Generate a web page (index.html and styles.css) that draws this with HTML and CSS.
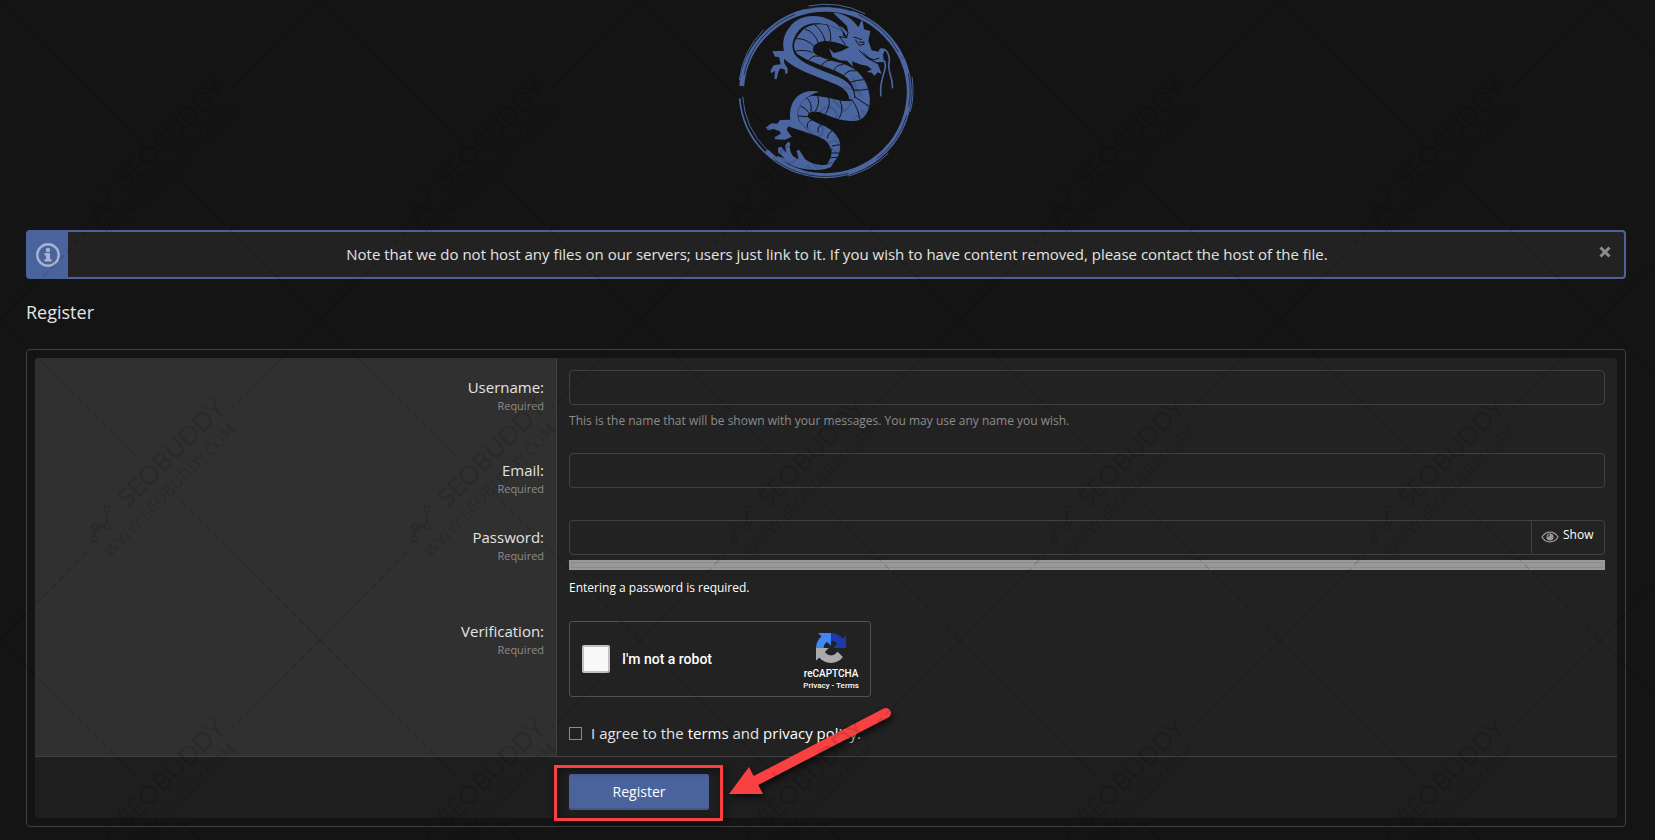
FILE: index.html
```html
<!DOCTYPE html>
<html lang="en">
<head>
<meta charset="utf-8">
<meta name="viewport" content="width=device-width, initial-scale=1">
<title>Register</title>
<link rel="stylesheet" href="styles.css">
</head>
<body>
<div class="page">
  <header class="header">
    <svg class="logo" viewBox="3 0 600 555" role="img" aria-label="Dragon logo">
      <g class="ring">
        <path stroke-width="15" d="M50 258A252 252 0 0 1 553 275A252 252 0 0 1 301 527A252 252 0 0 1 123 453"/>
        <path stroke-width="5" d="M44 295A257 257 0 0 0 119 457"/>
        <path stroke-width="3" d="M53 290A248 248 0 0 0 126 450"/>
        <path stroke-width="3" d="M116 89A262 262 0 0 0 43 240M250 18A262 262 0 0 1 420 41M561 230A261 261 0 0 1 556 335M490 460A263 263 0 0 1 370 528"/>
        <path class="scratch" stroke-width="2" d="M57 225A249 249 0 0 1 210 43M240 27A255 255 0 0 1 380 33M400 44A251 251 0 0 1 520 156M550 220A254 254 0 0 1 551 320M546 345A254 254 0 0 1 455 477M150 480A254 254 0 0 0 370 520"/>
      </g>
      <g class="dragon">
        <path d="M352 92C330 48 235 25 195 80C174 104 172 132 177 152L142 154L150 170L162 171L167 193L146 196L136 212L139 220L150 212L148 237L155 238L160 215L167 205L180 209L181 223L188 219L188 205L178 190L177 176C210 210 290 234 335 254C360 266 371 279 372 298L388 299C390 265 370 245 342 232C300 213 242 197 216 171C193 148 201 113 225 87C252 61 300 65 352 92Z"/>
        <path d="M352 94C300 62 250 69 228 96C204 122 202 145 216 161C250 187 320 203 350 222C378 238 390 264 391 290C385 306 365 304 348 302C320 295 290 287 263 287C235 289 219 319 219 345C220 369 242 385 270 395C300 405 318 425 320 450C320 472 311 485 307 492L332 480C343 466 347 448 345 430C341 408 325 393 300 379C280 369 254 360 248 350C247 338 262 330 285 337C320 352 350 365 390 363C420 360 438 330 434 290C428 240 400 205 350 190C318 182 285 174 268 160C256 143 272 123 302 123C324 123 345 130 362 137Z"/>
        <path d="M283 275C238 265 205 288 197 325C194 342 195 355 196 359L165 360L157 371L140 370L122 382L129 391L145 387L163 393L168 401L149 411L151 418L180 419L200 410L185 389L190 379C225 393 270 403 296 418C308 425 314 436 316 448L321 439C316 415 294 402 264 391C232 380 216 364 218 340C221 307 245 286 283 275Z"/>
        <path d="M318 488C291 505 252 487 240 477L222 449L214 452L221 478L206 470C195 459 193 444 196 430L189 425L180 437L184 459L169 440L159 443L160 458L179 475L155 467L164 482L193 492C223 511 290 516 318 501L337 469Z"/>
        <path d="M324 38C352 39 382 52 400 82L412 57L417 88L436 93L430 122L440 151L460 155L466 145L480 150L474 163L477 186L454 187L438 178L411 153L430 178L459 193L470 222L458 217L448 228L441 218L425 216L440 208L427 198L404 193L381 184L384 200L366 182L344 181L322 171L312 145L327 159L350 153L373 141L362 137L342 120L331 92L349 107L367 112L343 77L355 83L370 98L366 78Z"/>
        <path class="whisker" d="M464 151C478 140 493 155 493 183C484 213 505 230 502 265M477 181C492 210 460 230 468 289"/>
        <path class="cut" d="M304 72C315 85 319 105 316 124M270 75C285 87 297 106 300 124M240 88C260 92 274 111 280 129M214 116C235 115 255 125 268 140M207 155C225 149 245 151 263 157M252 181Q262 164 281 169M291 196Q299 180 318 181M327 211Q335 192 355 194M356 227Q370 207 392 213M376 247Q392 240 416 239M386 270Q407 273 429 267M389 290Q412 307 431 318M381 301Q400 324 404 358M345 302Q358 329 342 355M311 293Q318 320 299 345M278 287Q286 310 271 334M245 293Q262 308 258 335M226 318Q241 322 253 340M219 347Q234 350 248 350M248 382Q243 366 262 359M280 398Q275 382 290 374M307 415Q308 399 321 393M321 438L344 434M320 459L344 459M316 473L337 472"/>
        <path class="cut" d="M350 76L369 97L365 114L343 109L362 135M386 111L411 119M391 119L403 136L417 133L417 127L402 126M403 151L423 172L448 179L463 174"/>
      </g>
    </svg>
  </header>

  <div class="notice" role="note">
    <div class="notice-icon">
      <svg viewBox="0 0 24 24" width="24" height="24" aria-hidden="true">
        <circle cx="12" cy="12" r="10.7" fill="none" stroke="currentColor" stroke-width="2.4"/>
        <circle cx="12" cy="7" r="2.3" fill="currentColor"/>
        <path fill="currentColor" d="M8.5 10H14v6h1.500v2.500H8.500V16H10v-3.500H8.500z"/>
      </svg>
    </div>
    <p class="notice-text">Note that we do not host any files on our servers; users just link to it. If you wish to have content removed, please contact the host of the file.</p>
    <button class="notice-close" type="button" aria-label="Dismiss notice">
      <svg viewBox="0 0 12 12" width="12" height="12" aria-hidden="true"><path d="M1.500 1.500L10.500 10.500M10.500 1.500L1.500 10.500" stroke="currentColor" stroke-width="3"/></svg>
    </button>
  </div>

  <h1 class="title">Register</h1>

  <form class="block">
    <div class="block-body">
      <div class="row">
        <div class="row-label"><label for="username">Username:</label><span class="required">Required</span></div>
        <div class="row-field">
          <input class="input" id="username" type="text">
          <p class="hint">This is the name that will be shown with your messages. You may use any name you wish.</p>
        </div>
      </div>
      <div class="row">
        <div class="row-label"><label for="email">Email:</label><span class="required">Required</span></div>
        <div class="row-field"><input class="input" id="email" type="email"></div>
      </div>
      <div class="row">
        <div class="row-label"><label for="password">Password:</label><span class="required">Required</span></div>
        <div class="row-field">
          <div class="password">
            <input class="password-input" id="password" type="password">
            <button class="show" type="button">
              <svg viewBox="0 0 18 12" width="18" height="12" aria-hidden="true">
                <path d="M1 6C5-.5 13-.5 17 6C13 12.500 5 12.500 1 6Z" fill="none" stroke="currentColor" stroke-width="1.300"/>
                <circle cx="9" cy="6" r="3.500" fill="currentColor"/><path d="M7 6A2 2 0 0 1 9 4" fill="none" stroke="#222" stroke-width="1"/>
              </svg>
              <span>Show</span>
            </button>
          </div>
          <div class="meter"></div>
          <p class="meter-text">Entering a password is required.</p>
        </div>
      </div>
      <div class="row">
        <div class="row-label row-label-top"><span>Verification:</span><span class="required">Required</span></div>
        <div class="row-field">
          <div class="captcha">
            <input class="captcha-box" id="robot" type="checkbox">
            <label class="captcha-label" for="robot">I'm not a robot</label>
            <div class="captcha-brand">
              <svg viewBox="0 0 64 64" width="30" height="30" aria-hidden="true">
                <path fill="#1c3aa9" d="M64 31.955a33.100 33.100 0 0 0-.037-1.378V4.687l-7.157 7.157C50.948 4.674 42.033.093 32.050.093c-10.389 0-19.620 4.960-25.458 12.644l11.730 11.854a15.550 15.550 0 0 1 4.754-5.334c2.050-1.600 4.952-2.906 8.968-2.906.485 0 .860.057 1.135.163 4.976.393 9.288 3.140 11.828 7.124l-8.303 8.303 27.296-.014"/>
                <path fill="#4285f4" d="M31.862.094c-.465.007-.922.020-1.378.038H4.594l7.157 7.157C4.580 13.147 0 22.062 0 32.046c0 10.389 4.960 19.620 12.644 25.458l11.854-11.730a15.550 15.550 0 0 1-5.334-4.754c-1.600-2.050-2.906-4.952-2.906-8.968 0-.485.057-.860.163-1.135.393-4.976 3.140-9.288 7.124-11.828l8.303 8.303-.014-27.296"/>
                <path fill="#ababab" d="M0 32.140c.007.465.020.922.038 1.378v25.890l7.157-7.157C13.053 59.420 21.968 64 31.951 64c10.389 0 19.620-4.960 25.458-12.644L45.555 39.502a15.550 15.550 0 0 1-4.754 5.334c-2.050 1.600-4.952 2.906-8.968 2.906-.485 0-.860-.057-1.135-.163-4.976-.393-9.288-3.140-11.828-7.124l8.303-8.303L0 32.140"/>
              </svg>
              <span class="captcha-name">reCAPTCHA</span>
              <span class="captcha-links"><a href="#">Privacy</a> - <a href="#">Terms</a></span>
            </div>
          </div>
        </div>
      </div>
      <div class="row">
        <div class="row-label"></div>
        <div class="row-field agree">
          <input class="agree-box" id="agree" type="checkbox">
          <label for="agree">I agree to the <a href="#">terms</a> and <a href="#">privacy policy</a>.</label>
        </div>
      </div>
      <div class="footer">
        <div class="submit-wrap">
          <button class="submit" type="submit">Register</button>
          <div class="highlight"></div>
          <svg class="arrow" viewBox="0 0 170 96" width="170" height="96" aria-hidden="true">
            <path d="M161 12L30 80" stroke="#fa4141" stroke-width="10" stroke-linecap="round"/>
            <path d="M4 93L24 66L38 93Z" fill="#fa4141"/>
          </svg>
        </div>
      </div>
    </div>
  </form>
</div>

<svg class="watermark" aria-hidden="true">
  <defs>
    <pattern id="mark" width="320" height="320" patternUnits="userSpaceOnUse">
      <path class="mark-line" stroke-dasharray="7 4" d="M0 0L138 138M182 182L320 320M320 0L232 88M87 232L0 320"/>
      <g transform="rotate(-45 128 189)">
        <text class="mark-name" x="128" y="189">SEOBUDDY</text>
        <text class="mark-url" x="81" y="211">WWW.SEOBUDDY.COM</text>
      </g>
      <g class="mark-graph">
        <path d="M94 216L95 210M98 206L104 207M107 203L107 192"/>
        <circle cx="94" cy="219" r="3"/><circle cx="95" cy="207" r="3"/><circle cx="107" cy="206" r="3"/><circle cx="107" cy="189" r="3"/>
      </g>
    </pattern>
  </defs>
  <rect width="100%" height="100%" fill="url(#mark)"/>
</svg>
</body>
</html>
```
FILE: styles.css
```css
* { box-sizing: border-box; }

body {
  margin: 0;
  min-height: 100vh;
  position: relative;
  background: #141414;
  color: #e4e4e4;
  font: 15px/21px "Open Sans", "Noto Sans", sans-serif;
}

p { margin: 0; }
a { color: #fefefe; text-decoration: none; }
button, input { font: inherit; color: inherit; }

.page { padding: 0 29px 12px 26px; }

.header {
  display: flex;
  justify-content: center;
  margin-bottom: 45px;
}
.logo { width: 200px; height: 185px; }
.ring { fill: none; stroke: #4a659f; }
.ring .scratch { stroke: #141414; }
.dragon { fill: #4a659f; }
.dragon .whisker { fill: none; stroke: #4a659f; stroke-width: 5; }
.dragon .cut { fill: none; stroke: #141414; stroke-width: 3; }

.notice {
  display: flex;
  min-height: 49px;
  border: 2px solid #4a639c;
  border-radius: 4px;
  background: #222;
}
.notice-icon {
  display: flex;
  align-items: center;
  justify-content: center;
  width: 40px;
  padding-right: 1px;
  background: #4a639c;
  color: #a7b3cf;
}
.notice-text {
  flex: 1;
  padding: 12px 0;
  text-align: center;
}
.notice-close {
  align-self: flex-start;
  display: flex;
  width: 18px;
  margin: 14px 0 0;
  padding: 0;
  border: 0;
  background: none;
  color: #8c8c8c;
}
.notice-close svg { margin-left: -7px; }

.title {
  margin: 20px 0 24px;
  font-size: 18px;
  line-height: 26px;
  font-weight: 400;
}

.block {
  padding: 8px;
  border: 1px solid #414141;
  border-radius: 4px;
}
.block-body {
  border-radius: 3px;
  background: #222;
}

.row { display: flex; }
.row-label {
  width: 33%;
  padding: 19px 12px 12px;
  border-right: 1px solid #414141;
  background: #303030;
  text-align: right;
}
.row:first-child .row-label { border-top-left-radius: 3px; }
.row-label-top { padding-top: 12px; }
.required {
  display: block;
  color: #8c8c8c;
  font-size: 11px;
  line-height: 15px;
}
.row-field { flex: 1; padding: 12px; }

.input {
  display: block;
  width: 100%;
  height: 35px;
  padding: 6px;
  border: 1px solid #414141;
  border-radius: 4px;
  background: #222;
}
.hint {
  margin-top: 8px;
  color: #8c8c8c;
  font-size: 12px;
  line-height: 16px;
}

.password {
  display: flex;
  height: 35px;
  border: 1px solid #414141;
  border-radius: 4px;
}
.password-input {
  flex: 1;
  min-width: 0;
  padding: 6px;
  border: 0;
  background: none;
}
.show {
  display: flex;
  gap: 4px;
  width: 73px;
  padding: 5px 0 0 9px;
  border: 0;
  border-left: 1px solid #414141;
  background: none;
  color: #fefefe;
  font-size: 12px;
  line-height: 18px;
}
.show svg { margin-top: 5px; color: #999; }
.meter {
  height: 10px;
  margin-top: 5px;
  border: 2px solid #999;
  background: #999;
  box-shadow: inset 0 0 0 1px #8c8c8c;
}
.meter-text {
  margin: 9px 0 1px;
  color: #fefefe;
  font-size: 12px;
  line-height: 17px;
}

.captcha {
  display: flex;
  align-items: center;
  width: 302px;
  height: 76px;
  padding-left: 12px;
  border: 1px solid #525252;
  border-radius: 3px;
  color: #fff;
  font-family: Roboto, sans-serif;
}
.captcha-box {
  appearance: none;
  width: 28px;
  height: 28px;
  margin: 0;
  border: 2px solid #c1c1c1;
  border-radius: 2px;
  background: #f9f9f9;
}
.captcha-label {
  flex: 1;
  margin-left: 12px;
  font-size: 14px;
  font-weight: 500;
}
.captcha-brand {
  display: flex;
  flex-direction: column;
  align-items: center;
  width: 78px;
  padding-top: 6px;
  font-weight: 500;
}
.captcha-name {
  margin-top: 4px;
  font-size: 10px;
  line-height: 13px;
}
.captcha-links { font-size: 8px; line-height: 12px; }

.agree {
  display: flex;
  align-items: center;
  gap: 9px;
  padding-top: 14px;
}
.agree-box {
  appearance: none;
  width: 13px;
  height: 13px;
  margin: 0;
  border: 1px solid #8c8c8c;
}

.footer {
  padding: 17px 0 8px;
  border-top: 1px solid #414141;
  border-radius: 0 0 3px 3px;
  background: #1e1e1e;
}
.submit-wrap {
  position: relative;
  width: 140px;
  margin-left: calc(33% + 12px);
}
.submit {
  display: block;
  width: 100%;
  height: 36px;
  padding: 0;
  border: 0;
  border-bottom: 2px solid #425889;
  border-radius: 2px;
  background: #4a639c;
  color: #fefefe;
  font-size: 14px;
}
.highlight {
  position: absolute;
  inset: -9px -14px -11px -15px;
  border: 3px solid #fa4141;
  pointer-events: none;
  filter: drop-shadow(2px 3px 3px rgba(0, 0, 0, 0.6));
}
.arrow {
  position: absolute;
  left: 156px;
  bottom: 13px;
  pointer-events: none;
  filter: drop-shadow(2px 4px 3px rgba(0, 0, 0, 0.6));
}

.watermark {
  position: absolute;
  inset: 0;
  width: 100%;
  height: 100%;
  opacity: 0.11;
  pointer-events: none;
}
.mark-line, .mark-graph { fill: none; stroke: #000; stroke-width: 2; }
.mark-name { font: 500 26px Lato, sans-serif; }
.mark-url { font: 16px "DejaVu Sans", sans-serif; }
```
